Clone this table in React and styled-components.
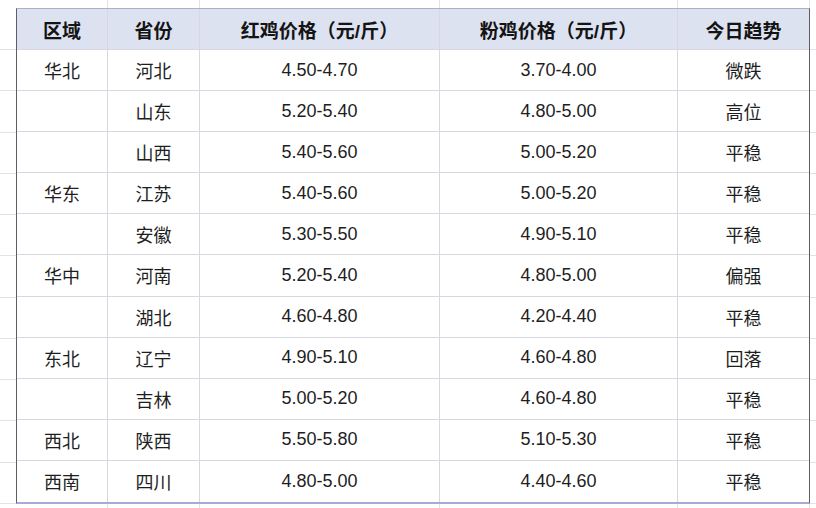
import styled, { createGlobalStyle } from "styled-components"

const GlobalStyle = createGlobalStyle`
html, body {
  margin: 0;
  padding: 0;
  background: #ffffff;
}
body {
  font-family: "Liberation Sans", "Noto Sans CJK SC", sans-serif;
  color: #1c1c1c;
}
`

const columns = [92, 92, 240, 238, 132]
const headers = ["区域", "省份", "红鸡价格（元/斤）", "粉鸡价格（元/斤）", "今日趋势"]
const rows = [
  ["华北", "河北", "4.50-4.70", "3.70-4.00", "微跌"],
  ["", "山东", "5.20-5.40", "4.80-5.00", "高位"],
  ["", "山西", "5.40-5.60", "5.00-5.20", "平稳"],
  ["华东", "江苏", "5.40-5.60", "5.00-5.20", "平稳"],
  ["", "安徽", "5.30-5.50", "4.90-5.10", "平稳"],
  ["华中", "河南", "5.20-5.40", "4.80-5.00", "偏强"],
  ["", "湖北", "4.60-4.80", "4.20-4.40", "平稳"],
  ["东北", "辽宁", "4.90-5.10", "4.60-4.80", "回落"],
  ["", "吉林", "5.00-5.20", "4.60-4.80", "平稳"],
  ["西北", "陕西", "5.50-5.80", "5.10-5.30", "平稳"],
  ["西南", "四川", "4.80-5.00", "4.40-4.60", "平稳"],
]

// sheet gridlines outside the table follow the table's rows
const rowHeights = [42, ...Array(11).fill((496 - 42) / 11)]

const Sheet = styled.div`
width: 816px;
height: 508px;
overflow: hidden;
display: grid;
grid-template-columns: 16px 794px 1fr;
grid-template-rows: 8px 496px 1fr;
`
const Strip = styled.div`
display: flex;
flex-direction: ${p => (p.$vertical ? "column" : "row")};
`
const GutterCell = styled.div`
flex: none;
box-sizing: border-box;
${p => (p.$vertical ? "border-bottom: 1px solid #e3e3e6;" : "border-right: 1px solid #e3e3e6;")}
`
const Empty = styled.div``

const Table = styled.div`
box-sizing: border-box;
height: 496px;
border-left: 1px solid #5d5d66;
border-right: 1px solid #5d5d66;
border-top: 1px solid #aab0cc;
border-bottom: 2px solid #aaaad6;
display: grid;
grid-template-columns: 91px 92px 240px 238px 1fr;
grid-template-rows: 41px repeat(11, 1fr);
`
const Cell = styled.div`
box-sizing: border-box;
display: flex;
align-items: center;
justify-content: center;
border-right: ${p => (p.$last ? "none" : "1px solid #d7d8df")};
border-bottom: ${p => (p.$bottom ? "none" : "1px solid #d7d8df")};
background: ${p => (p.$head ? "#dde2f1" : "#ffffff")};
font-size: ${p => (p.$head ? "19px" : "18px")};
font-weight: ${p => (p.$head ? 700 : 400)};
color: ${p => (p.$head ? "#141414" : "#1e1e1e")};
white-space: nowrap;
`

const HorizontalGutter = () => (
  <Strip>
    {columns.map((w, i) => (
      <GutterCell key={i} style={{ width: w }} />
    ))}
  </Strip>
)

const VerticalGutter = () => (
  <Strip $vertical>
    {rowHeights.map((h, i) => (
      <GutterCell $vertical key={i} style={{ height: h }} />
    ))}
  </Strip>
)

const App = () => {
  return (
    <>
      <GlobalStyle />
      <Sheet>
        <Empty />
        <HorizontalGutter />
        <Empty />
        <VerticalGutter />
        <Table>
          {headers.map((h, i) => (
            <Cell $head key={h} $last={i === 4}>{h}</Cell>
          ))}
          {rows.map((r, ri) =>
            r.map((c, ci) => (
              <Cell key={ri + "-" + ci} $last={ci === 4} $bottom={ri === rows.length - 1}>{c}</Cell>
            ))
          )}
        </Table>
        <VerticalGutter />
        <Empty />
        <HorizontalGutter />
        <Empty />
      </Sheet>
    </>
  )
}

export default App
